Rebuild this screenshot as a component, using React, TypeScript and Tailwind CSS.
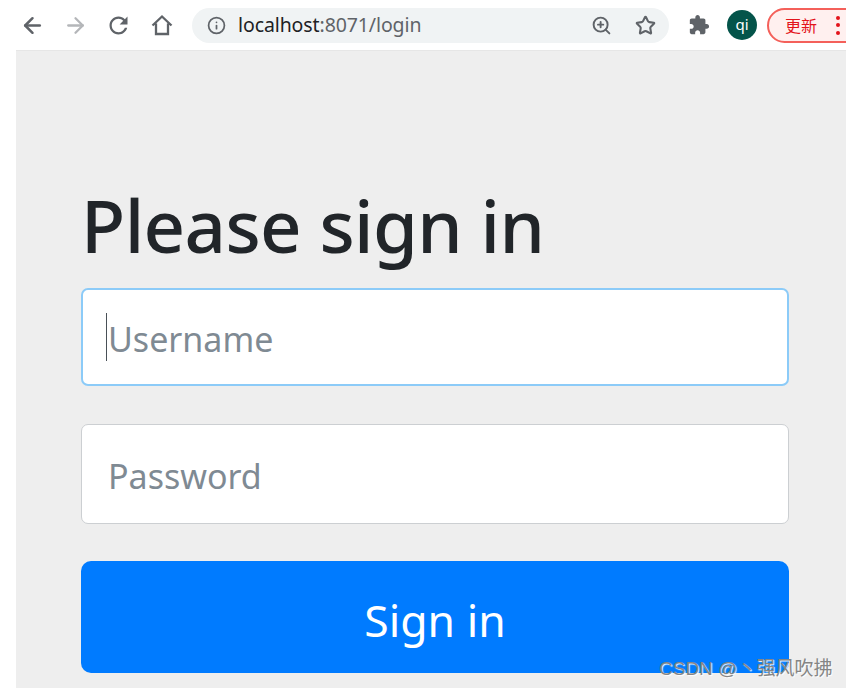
import { ArrowLeft, ArrowRight, Info, Star, ZoomIn } from "lucide-react";

const Reload = () => (
  <svg width="27" height="27" viewBox="0 0 24 24" fill="#5f6368">
    <path d="M17.65 6.35C16.2 4.9 14.21 4 12 4c-4.42 0-7.99 3.58-7.99 8s3.57 8 7.99 8c3.73 0 6.84-2.55 7.73-6h-2.08c-.82 2.33-3.04 4-5.65 4-3.31 0-6-2.69-6-6s2.69-6 6-6c1.66 0 3.14.69 4.22 1.78L13 11h7V4l-2.35 2.35z" />
  </svg>
);

const Puzzle = () => (
  <svg width="22" height="22" viewBox="0 0 24 24" fill="#5f6368">
    <path d="M20.5 11H19V7c0-1.1-.9-2-2-2h-4V3.5C13 2.12 11.88 1 10.5 1S8 2.12 8 3.5V5H4c-1.1 0-2 .9-2 2v3.8h1.5c1.49 0 2.7 1.21 2.7 2.7s-1.21 2.7-2.7 2.7H2V20c0 1.1.9 2 2 2h3.8v-1.5c0-1.49 1.21-2.7 2.7-2.7s2.7 1.21 2.7 2.7V22H17c1.1 0 2-.9 2-2v-4h1.5c1.38 0 2.5-1.12 2.5-2.5S21.88 11 20.5 11z" />
  </svg>
);

const Home = () => (
  <svg width="24" height="24" viewBox="0 0 24 24" fill="none" stroke="#5f6368" strokeWidth="2.3">
    <path d="M2.5 12.5 12 3.5l9.5 9M6 10.5V21h12V10.5" />
  </svg>
);

const App = () => {
  return (
    <div className="w-[846px] h-[688px] overflow-hidden bg-white font-['Noto_Sans','Open_Sans',sans-serif]">
      {/*==================== Browser Toolbar ====================*/}
      <div className="h-[50px] flex items-center bg-white">
        <div className="flex items-center ml-[20px] gap-[18px] shrink-0">
          <ArrowLeft size={25} color="#5f6368" strokeWidth={2.4} />
          <ArrowRight size={25} color="#b4b6b9" strokeWidth={2.2} />
        </div>
        <div className="ml-[17px] shrink-0">
          <Reload />
        </div>
        <div className="ml-[18px] shrink-0">
          <Home />
        </div>

        {/*==================== Address Bar ====================*/}
        <div className="ml-[18px] w-[477px] h-[35px] shrink-0 rounded-full bg-[#f0f3f4] flex items-center pl-[15px] pr-[13px]">
          <Info size={19} color="#5f6368" strokeWidth={2.2} />
          <span className="ml-[12px] text-[19.5px] text-[#202124] tracking-[-0.1px]">
            localhost<span className="text-[#5f6368]">:8071/login</span>
          </span>
          <ZoomIn size={21} color="#5f6368" strokeWidth={2.2} className="ml-auto" />
          <Star size={21} color="#5f6368" strokeWidth={2.4} className="ml-[23px]" />
        </div>

        <div className="ml-[19px] shrink-0">
          <Puzzle />
        </div>
        <div className="ml-[17px] w-[30px] h-[30px] shrink-0 rounded-full bg-[#04544a] flex items-center justify-center text-white text-[15px] pb-[1px]">
          qi
        </div>
        <div className="ml-[10px] w-[100px] h-[35px] shrink-0 rounded-full border-2 border-[#f4605a] bg-[#fff0ef] flex items-center pl-[16px]">
          <span className="text-[16px] text-[#e3131b] font-['Noto_Sans_CJK_SC',sans-serif]">更新</span>
          <span className="ml-[19px] flex flex-col gap-[3.5px]">
            <span className="w-[4px] h-[4px] rounded-full bg-[#e3131b]" />
            <span className="w-[4px] h-[4px] rounded-full bg-[#e3131b]" />
            <span className="w-[4px] h-[4px] rounded-full bg-[#e3131b]" />
          </span>
        </div>
      </div>

      {/*==================== Page ====================*/}
      <div className="relative ml-[16px] h-[638px] bg-[#eeeeee] border-t border-[#e6e6e6] pl-[65px] pr-[57px]">
        <h2 className="mt-[125px] h-[112px] text-[72.5px] leading-[97px] font-medium text-[#212529] tracking-[-0.6px]">
          Please sign in
        </h2>

        <div className="relative">
          <input
            placeholder="Username"
            className="block w-full h-[98px] rounded-[7px] border-2 border-[#8ccbf8] bg-white pl-[25px] pt-[4px] text-[34px] placeholder:text-[#7f8a93] outline-none"
          />
          <span className="absolute left-[25px] top-[25px] w-[1px] h-[48px] bg-[#495057]" />
        </div>

        <input
          placeholder="Password"
          className="block w-full h-[100px] mt-[38px] rounded-[7px] border border-[#cccfd2] bg-white pl-[26px] pt-[4px] text-[34px] placeholder:text-[#7f8a93] outline-none"
        />

        <button className="block w-full h-[112px] mt-[37px] pt-[6px] rounded-[10px] bg-[#007bff] text-white text-[44.5px]">
          Sign in
        </button>

        {/*==================== Watermark ====================*/}
        <span className="absolute left-[643px] top-[606px] text-[19px] leading-[24px] text-[#858585] [text-shadow:1px_1px_1px_#ffffff] whitespace-nowrap font-['Liberation_Sans','Noto_Sans_CJK_SC',sans-serif]">
          CSDN @丶强风吹拂
        </span>
      </div>
    </div>
  );
};

export default App;
